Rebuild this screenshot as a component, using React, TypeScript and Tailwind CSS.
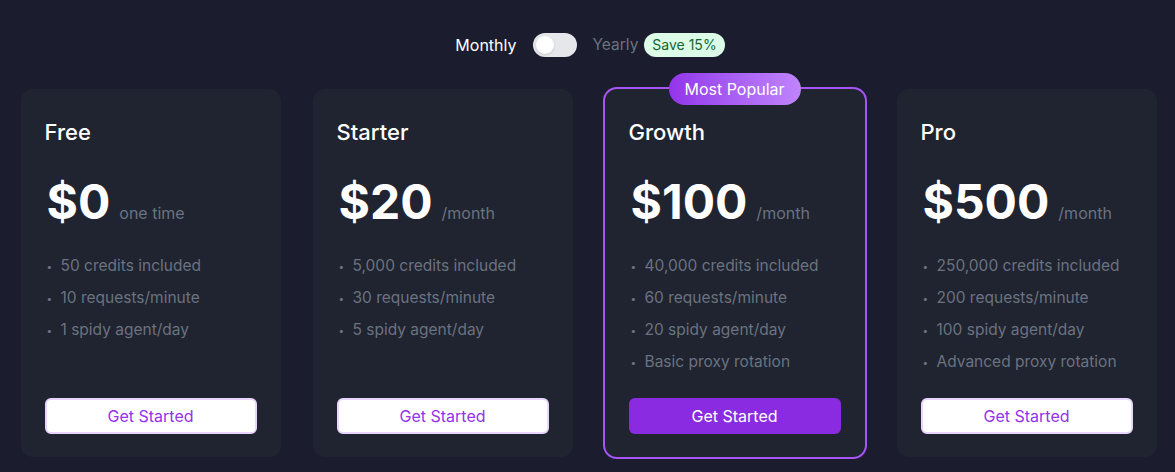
import React from 'react'

interface Plan {
  name: string
  price: string
  period: string
  features: string[]
  popular?: boolean
}

const plans: Plan[] = [
  {
    name: 'Free',
    price: '$0',
    period: 'one time',
    features: ['50 credits included', '10 requests/minute', '1 spidy agent/day'],
  },
  {
    name: 'Starter',
    price: '$20',
    period: '/month',
    features: ['5,000 credits included', '30 requests/minute', '5 spidy agent/day'],
  },
  {
    name: 'Growth',
    price: '$100',
    period: '/month',
    popular: true,
    features: ['40,000 credits included', '60 requests/minute', '20 spidy agent/day', 'Basic proxy rotation'],
  },
  {
    name: 'Pro',
    price: '$500',
    period: '/month',
    features: ['250,000 credits included', '200 requests/minute', '100 spidy agent/day', 'Advanced proxy rotation'],
  },
]

const PlanCard: React.FC<{ plan: Plan }> = ({ plan }) => {
  return (
    <div
      className={
        'relative flex flex-col rounded-xl bg-[#1f2430] px-6 pt-6 pb-[23px] h-[368px] ' +
        (plan.popular ? 'ring-2 ring-[#a855f7]' : '')
      }
    >
      {plan.popular && (
        <div className="absolute -top-4 left-1/2 -translate-x-1/2 h-8 px-4 flex items-center rounded-full bg-gradient-to-r from-[#9333ea] to-[#c084fc] text-white text-base whitespace-nowrap">
          Most Popular
        </div>
      )}
      <h3 className="text-[22px] leading-8 font-medium text-white mt-[3px]">{plan.name}</h3>
      <div className="flex items-baseline mt-[30px] pl-[2px]">
        <span className="text-[48px] leading-[48px] font-bold text-white">{plan.price}</span>
        <span className="ml-[9px] text-base text-[#6b7280]">{plan.period}</span>
      </div>
      <ul className="mt-[24px] flex flex-col">
        {plan.features.map((f) => (
          <li key={f} className="flex items-center h-8 text-[15.5px] text-[#6b7280]">
            <span className="w-[15px] pl-[2px] text-[10px]">•</span>
            <span className="ml-[1px]">{f}</span>
          </li>
        ))}
      </ul>
      <div className="mt-auto">
        {plan.popular ? (
          <button className="w-full h-9 rounded-md bg-[#8a2be2] text-white text-base">Get Started</button>
        ) : (
          <button className="w-full h-9 rounded-md bg-white border-2 border-[#e9d5ff] text-[#9333ea] text-base">
            Get Started
          </button>
        )}
      </div>
    </div>
  )
}

export default function App() {
  return (
    <div className="min-h-[472px] bg-[#1b1d2f]" style={{ fontFamily: 'Inter, sans-serif' }}>
      <div className="flex items-center justify-center pt-[33px] pl-[5px]">
        <span className="text-base text-white">Monthly</span>
        <div className="ml-4 w-11 h-6 rounded-full bg-[#e5e7eb] flex items-center px-[3px]">
          <div className="w-[18px] h-[18px] rounded-full bg-white shadow-sm" />
        </div>
        <span className="ml-4 text-[15.5px] text-[#6b7280]">Yearly</span>
        <span className="ml-[6px] h-6 px-2 flex items-center rounded-full bg-[#dcfce7] text-[#166534] text-sm">
          Save 15%
        </span>
      </div>
      <div className="mx-auto w-[1136px] grid grid-cols-4 gap-8 mt-8 pb-4 translate-x-[1px]">
        {plans.map((p) => (
          <PlanCard key={p.name} plan={p} />
        ))}
      </div>
    </div>
  )
}
